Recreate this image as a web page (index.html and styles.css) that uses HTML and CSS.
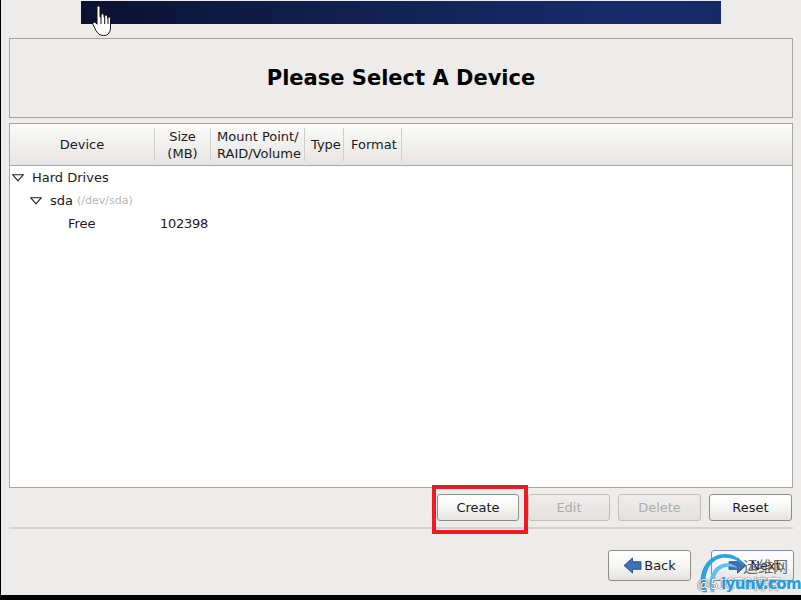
FILE: index.html
```html
<!DOCTYPE html>
<html lang="en">
<head>
<meta charset="utf-8">
<title>Please Select A Device</title>
<link rel="stylesheet" href="styles.css">
</head>
<body>
<div class="app">
  <div class="banner"></div>
  <div class="title-box"><h1>Please Select A Device</h1></div>
  <div class="tree">
    <div class="tree-head">
      <div class="col col-device">Device</div>
      <div class="col col-size">Size<br>(MB)</div>
      <div class="col col-mount">Mount Point/<br>RAID/Volume</div>
      <div class="col col-type">Type</div>
      <div class="col col-format">Format</div>
    </div>
    <div class="tree-body">
      <div class="row row-l0"><svg class="arrow" viewBox="0 0 12 8"><path d="M.8.8h10.4L6 6.8z" fill="#fff" stroke="#222" stroke-width="1.1"/></svg><span>Hard Drives</span></div>
      <div class="row row-l1"><svg class="arrow" viewBox="0 0 12 8"><path d="M.8.8h10.4L6 6.8z" fill="#fff" stroke="#222" stroke-width="1.1"/></svg><span>sda</span><span class="path">(/dev/sda)</span></div>
      <div class="row row-l2"><span class="name">Free</span><span class="num">102398</span></div>
    </div>
  </div>
  <div class="actions">
    <div class="highlight"><button class="btn btn-narrow">Create</button></div>
    <button class="btn btn-narrow btn-first" disabled>Edit</button>
    <button class="btn" disabled>Delete</button>
    <button class="btn">Reset</button>
  </div>
  <div class="rule"></div>
  <div class="nav">
    <button class="btn nav-btn"><svg class="nav-icon" viewBox="0 0 20 18"><path d="M1 9 10 1v4h9v8h-9v4z" fill="#3f72b3" stroke="#2a528c"/></svg>Back</button>
    <button class="btn nav-btn next"><svg class="nav-icon" viewBox="0 0 20 18"><path d="M19 9 10 1v4H1v8h9v4z" fill="#3f72b3" stroke="#2a528c"/></svg>Next</button>
  </div>
  <svg class="cursor" viewBox="0 0 20 32"><path d="M5 2.500c0-2 3-2 3 0V12l1 0V10c0-1.600 3-1.600 3 0v2h.6v-1c0-1.500 2.800-1.500 2.800 0v2h.4c0-1.400 2.700-1.300 2.700.3V22c0 5-2 8.500-7 8.500-3.500 0-5.500-1.500-7.500-5L1 19.500c-.8-2 1.500-3 3-1.500l1 1.200z" fill="#fff" stroke="#111" stroke-width="1"/><path d="M9 12v7M12.700 12v7M16 13v6" stroke="#111" stroke-width="1" fill="none"/></svg>
  <div class="watermark">
    <svg class="swirl" viewBox="0 0 60 46"><path d="M6 43C-1 24 10 2 30 2c10 0 17 5 22 14C45 9 38 6 30 6 14 6 5 24 11 43z" fill="#2aa3e2"/><path d="M15 43C10 28 18 13 31 12c6 0 10 2 13 6-4-2-8-3-12-2-11 1-16 14-13 27z" fill="#62c2ee"/></svg>
    <span class="wm-cn">运维网</span>
    <span class="wm-grey">@51CTO博客</span>
    <span class="wm-blue">iyunv.com</span>
  </div>
</div>
</body>
</html>
```
FILE: styles.css
```css
* { box-sizing: border-box; }
html, body { margin: 0; height: 100%; background: #000; overflow: hidden; }
.app {
  position: relative;
  width: 800px;
  height: 595px;
  margin-left: 1px;
  padding: 1px 8px 0;
  background: #edecea;
  font: 13px/16px "DejaVu Sans", sans-serif;
  color: #1a1a1a;
  display: flex;
  flex-direction: column;
}
.banner {
  width: 640px;
  height: 23px;
  margin-left: 72px;
  background: linear-gradient(90deg, #0a1230 0%, #10204f 40%, #182c6b 85%, #162a66 100%);
}
.title-box {
  margin-top: 14px;
  height: 80px;
  border: 1px solid #a5a4a1;
  display: flex;
  align-items: center;
  justify-content: center;
}
h1 { margin: -1px 0 0; font-size: 21px; line-height: 24px; font-weight: 700; color: #000; }
.tree {
  margin-top: 5px;
  height: 365px;
  border: 1px solid #a5a4a1;
  background: #fff;
  display: flex;
  flex-direction: column;
}
.tree-head {
  height: 42px;
  display: flex;
  padding: 4px 0;
  border-bottom: 1px solid #a9a8a5;
  background: linear-gradient(#fbfbfa, #e6e5e3);
}
.col {
  display: flex;
  align-items: center;
  border-right: 1px solid #cfcec9;
  line-height: 17px;
  padding-left: 6px;
}
.col-device { width: 145px; justify-content: center; padding: 0; }
.col-size { width: 56px; padding: 0; justify-content: center; text-align: center; }
.col-mount { width: 94px; }
.col-type { width: 39px; }
.col-format { width: 58px; padding-left: 7px; }
.row { height: 23px; display: flex; align-items: center; }
.arrow { width: 12px; height: 8px; flex: none; }
.row-l0 { padding-left: 2px; }
.row-l0 .arrow { margin-right: 8px; }
.row-l1 { padding-left: 20px; }
.row-l1 .arrow { margin-right: 8px; }
.path { font-size: 11px; color: #b8b7b4; margin-left: 4px; }
.row-l2 { padding-left: 58px; }
.name { width: 92px; }
.num { letter-spacing: -.25px; }
.actions {
  display: flex;
  margin-top: 6px;
  padding-left: 428px;
  gap: 8px;
  height: 27px;
}
.btn {
  width: 83px;
  height: 27px;
  padding: 0;
  border: 1px solid #8f8e8b;
  border-radius: 3px;
  background: linear-gradient(#ffffff 0%, #f6f6f5 50%, #e4e3e1 100%);
  font: 13px/16px "DejaVu Sans", sans-serif;
  color: #1a1a1a;
}
.btn-narrow { width: 82px; }
.btn-first { margin-left: 1px; }
.btn:disabled {
  color: #adacaa;
  border-color: #c0bfbc;
  background: linear-gradient(#efeeec, #e2e1df);
}
.highlight {
  position: relative;
  width: 82px;
  height: 27px;
}
.highlight::after {
  content: "";
  position: absolute;
  box-sizing: border-box;
  left: -5px;
  top: -9px;
  width: 96px;
  height: 49px;
  border: 4px solid #ed1c24;
  pointer-events: none;
}
.rule { margin-top: 6px; height: 2px; background: #d3d2ce; }
.nav {
  display: flex;
  justify-content: flex-end;
  gap: 20px;
  margin-top: 21px;
  margin-right: -1px;
}
.nav-btn {
  height: 31px;
  display: flex;
  align-items: center;
  justify-content: center;
  gap: 2px;
}
.nav-icon { width: 19px; height: 17px; }
.next { border-color: #6a97c9; gap: 3px; padding-left: 4px; }
.cursor { position: absolute; left: 91px; top: 5px; width: 20px; height: 32px; }
.watermark { position: absolute; left: 696px; top: 552px; width: 104px; height: 43px; overflow: hidden; pointer-events: none; }
.swirl { position: absolute; left: 0; top: 0; width: 56px; height: 43px; }
.wm-cn { position: absolute; left: 46px; top: 4px; font: 15px/20px "Noto Sans CJK SC", sans-serif; color: #666; }
.wm-grey { position: absolute; left: 0; top: 22px; font: 14px/18px "Noto Sans CJK SC", sans-serif; color: #fff; text-shadow: 0 0 1px #444, 0 0 1px #444; white-space: nowrap; }
.wm-blue { position: absolute; left: 24px; top: 23px; font: 700 15px/18px "DejaVu Sans", sans-serif; color: #1d9fe0; white-space: nowrap; letter-spacing: -.6px; }
```
